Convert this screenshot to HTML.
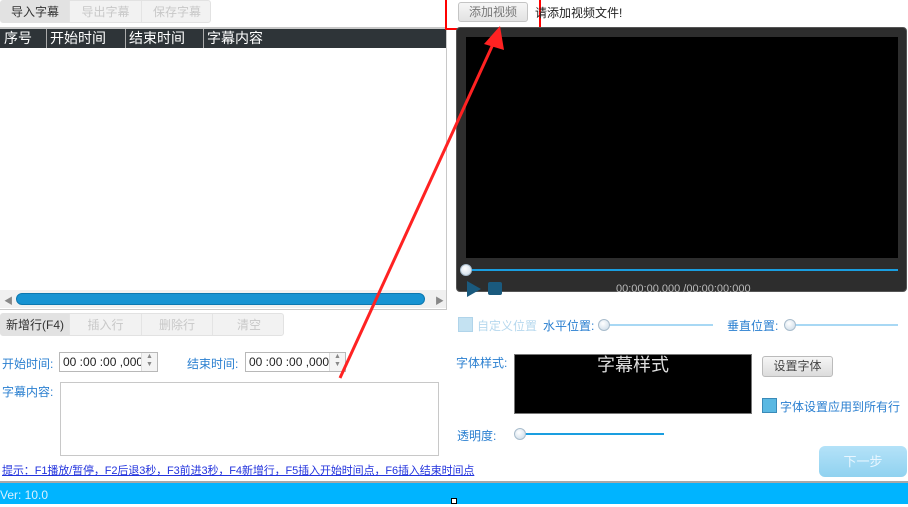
<!DOCTYPE html>
<html><head><meta charset="utf-8"><style>
*{margin:0;padding:0;box-sizing:border-box}
body{width:908px;height:504px;background:#fff;position:relative;overflow:hidden;font-family:"Liberation Sans","Noto Sans CJK SC",sans-serif;font-size:12px;color:#333}
.a{position:absolute}
.tb{background:#f2f2f2;border:1px solid #e2e2e2;border-radius:3px}
.btn{position:absolute;top:0;height:100%;text-align:center;color:#c8c8c8;border-right:1px solid #e4e4e4}
.lbl{color:#2a7fd0}
.inp{border:1px solid #b8b8b8;background:#fff;height:20px;font-size:12px;line-height:18px;padding-left:3px;color:#222}
.spin{position:absolute;right:0;top:0;width:16px;height:18px;border-left:1px solid #ddd;background:#f4f4f4;font-size:7px;line-height:8px;text-align:center;color:#888}
.knob{position:absolute;width:12px;height:12px;border-radius:50%;background:radial-gradient(circle at 40% 35%,#fff,#c8d8e6);border:1px solid #a8bccc}
</style></head><body>
<div class="a tb" style="left:0;top:0;width:211px;height:23px">
<div class="btn" style="left:0;width:69px;background:#e2e2e2;color:#333;line-height:22px">导入字幕</div>
<div class="btn" style="left:69px;width:72px;line-height:22px">导出字幕</div>
<div class="btn" style="left:141px;width:70px;line-height:22px;border:none">保存字幕</div>
</div>
<div class="a" style="left:0;top:27px;width:447px;height:283px;border:1px solid #c8c8c8;border-left:none;border-top:2px solid #c8c8c8"></div>
<div class="a" style="left:0;top:29px;width:446px;height:19px;background:#2e3438;color:#fff;font-size:14px;line-height:19px">
<span class="a" style="left:4px">序号</span><span class="a" style="left:46px;border-left:1px solid #aaa;padding-left:3px;height:19px">开始时间</span><span class="a" style="left:125px;border-left:1px solid #aaa;padding-left:3px;height:19px">结束时间</span><span class="a" style="left:203px;border-left:1px solid #aaa;padding-left:3px;height:19px">字幕内容</span></div>
<div class="a" style="left:0;top:290px;width:446px;height:18px;background:#f0f0f0"></div>
<div class="a" style="left:4px;top:294px;font-size:9px;color:#888">◀</div>
<div class="a" style="left:435px;top:294px;font-size:9px;color:#888">▶</div>
<div class="a" style="left:16px;top:293px;width:409px;height:12px;background:#1793d2;border-radius:6px;border:1px solid #0d78b0"></div>
<div class="a tb" style="left:0;top:313px;width:284px;height:23px">
<div class="btn" style="left:0;width:69px;background:#e2e2e2;color:#333;line-height:22px">新增行(F4)</div>
<div class="btn" style="left:69px;width:72px;line-height:22px">插入行</div>
<div class="btn" style="left:141px;width:71px;line-height:22px">删除行</div>
<div class="btn" style="left:212px;width:72px;line-height:22px;border:none">清空</div>
</div>
<div class="a lbl" style="left:2px;top:355px">开始时间:</div>
<div class="a inp" style="left:59px;top:352px;width:99px">00 :00 :00 ,000<div class="spin">▲<br>▼</div></div>
<div class="a lbl" style="left:187px;top:355px">结束时间:</div>
<div class="a inp" style="left:245px;top:352px;width:101px">00 :00 :00 ,000<div class="spin">▲<br>▼</div></div>
<div class="a lbl" style="left:2px;top:383px">字幕内容:</div>
<div class="a" style="left:60px;top:382px;width:379px;height:74px;border:1px solid #c8c8c8"></div>
<div class="a" style="left:2px;top:462px;font-size:11px;color:#2233dd;text-decoration:underline;white-space:nowrap;letter-spacing:-0.1px">提示：F1播放/暂停，F2后退3秒，F3前进3秒，F4新增行，F5插入开始时间点，F6插入结束时间点</div>
<div class="a" style="left:0;top:481px;width:908px;height:2px;background:#a8a8a8"></div>
<div class="a" style="left:0;top:483px;width:908px;height:21px;background:#00b4ff;color:#d8f0ff;font-size:12px;line-height:24px">Ver: 10.0</div>
<div class="a" style="left:451px;top:498px;width:6px;height:6px;border:1px solid #000;background:#fff"></div>
<div class="a" style="left:458px;top:2px;width:70px;height:20px;background:linear-gradient(#f6f6f6,#e2e2e2);border:1px solid #c4c4c4;border-radius:3px;color:#777;text-align:center;line-height:18px">添加视频</div>
<div class="a" style="left:445px;top:0;width:96px;height:30px;border:2px solid #f00;border-top:none"></div>
<div class="a" style="left:535px;top:4px;color:#222">请添加视频文件!</div>
<div class="a" style="left:456px;top:27px;width:451px;height:265px;background:#2d2d2d;border-radius:4px;border:1px solid #555"></div>
<div class="a" style="left:466px;top:37px;width:432px;height:221px;background:#000"></div>
<div class="a" style="left:466px;top:269px;width:432px;height:2px;background:#1a9ee0"></div>
<div class="knob" style="left:460px;top:264px"></div>
<div class="a" style="left:467px;top:281px;width:0;height:0;border-left:14px solid #1a5a7e;border-top:8px solid transparent;border-bottom:8px solid transparent"></div>
<div class="a" style="left:488px;top:282px;width:14px;height:13px;background:#1a5a7e;border-radius:2px"></div>
<div class="a" style="left:616px;top:283px;color:#bbb;font-size:11px">00:00:00.000 /00:00:00:000</div>
<div class="a" style="left:458px;top:317px;width:15px;height:15px;background:#c4e2f2;border:1px solid #b0d4ea"></div>
<div class="a" style="left:477px;top:317px;color:#b6d8ee">自定义位置</div>
<div class="a lbl" style="left:543px;top:317px">水平位置:</div>
<div class="a" style="left:602px;top:324px;width:111px;height:2px;background:#a8d8f4"></div>
<div class="knob" style="left:598px;top:319px"></div>
<div class="a lbl" style="left:727px;top:317px">垂直位置:</div>
<div class="a" style="left:790px;top:324px;width:108px;height:2px;background:#a8d8f4"></div>
<div class="knob" style="left:784px;top:319px"></div>
<div class="a lbl" style="left:456px;top:354px">字体样式:</div>
<div class="a" style="left:514px;top:354px;width:238px;height:60px;background:#000;border:1px solid #777;color:#ddd;font-size:18px;text-align:center;line-height:20px">字幕样式</div>
<div class="a" style="left:762px;top:356px;width:71px;height:21px;background:linear-gradient(#f6f6f6,#dcdcdc);border:1px solid #bbb;border-radius:3px;color:#444;text-align:center;line-height:19px">设置字体</div>
<div class="a" style="left:762px;top:398px;width:15px;height:15px;background:#5ab8e2;border:1px solid #3a8ab8"></div>
<div class="a lbl" style="left:780px;top:398px">字体设置应用到所有行</div>
<div class="a lbl" style="left:457px;top:427px">透明度:</div>
<div class="a" style="left:520px;top:433px;width:144px;height:2px;background:#1a9ee0"></div>
<div class="knob" style="left:514px;top:428px"></div>
<div class="a" style="left:819px;top:446px;width:88px;height:31px;background:linear-gradient(#b4e2f8,#90d2f0);border-radius:6px;color:#e8f6ff;text-align:center;line-height:31px;font-size:13px">下一步</div>
<svg class="a" style="left:0;top:0" width="908" height="504"><line x1="340" y1="378" x2="494" y2="42" stroke="#f22" stroke-width="3"/><polygon points="500,26 484,44 504,50" fill="#f22"/></svg>
</body></html>
